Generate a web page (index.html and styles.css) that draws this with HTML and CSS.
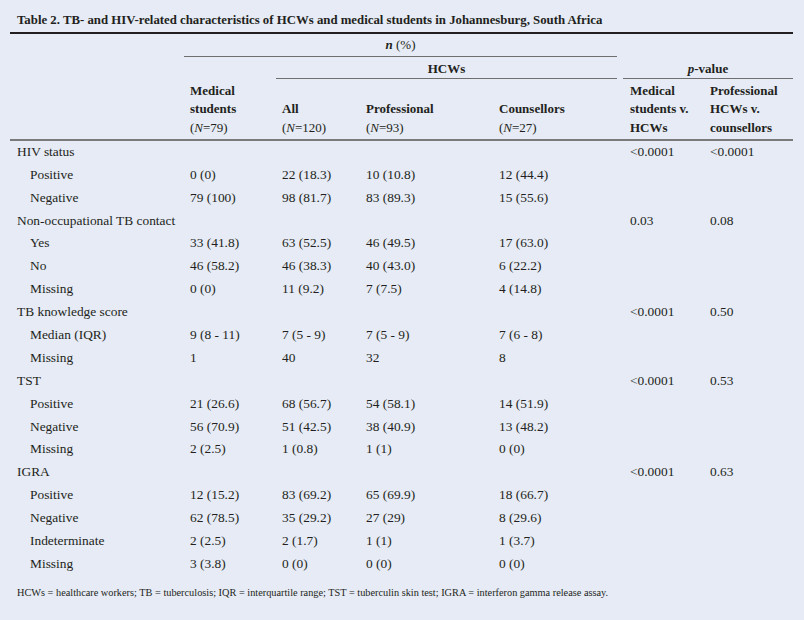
FILE: index.html
```html
<!DOCTYPE html>
<html>
<head>
<meta charset="utf-8">
<link rel="stylesheet" href="styles.css">
</head>
<body>
<div class="page">
  <h1 class="title">Table 2. TB- and HIV-related characteristics of HCWs and medical students in Johannesburg, South Africa</h1>
  <div class="grid">
    <div class="h1 span-n"><b><i>n</i></b> <span class="reg">(%)</span></div>

    <div class="h2 span-hcw">HCWs</div>
    <div class="h2 span-p"><i>p</i>-value</div>

    <div class="h3"></div>
    <div class="h3"><b>Medical<br>students</b><br>(<i>N</i>=79)</div>
    <div class="h3"><br><b>All</b><br>(<i>N</i>=120)</div>
    <div class="h3"><br><b>Professional</b><br>(<i>N</i>=93)</div>
    <div class="h3"><br><b>Counsellors</b><br>(<i>N</i>=27)</div>
    <div class="h3"><b>Medical<br>students v.<br>HCWs</b></div>
    <div class="h3"><b>Professional<br>HCWs v.<br>counsellors</b></div>

    <div class="c lab">HIV status</div><div class="c"></div><div class="c"></div><div class="c"></div><div class="c"></div><div class="c">&lt;0.0001</div><div class="c">&lt;0.0001</div>
    <div class="c sub">Positive</div><div class="c">0 (0)</div><div class="c">22 (18.3)</div><div class="c">10 (10.8)</div><div class="c">12 (44.4)</div><div class="c"></div><div class="c"></div>
    <div class="c sub">Negative</div><div class="c">79 (100)</div><div class="c">98 (81.7)</div><div class="c">83 (89.3)</div><div class="c">15 (55.6)</div><div class="c"></div><div class="c"></div>

    <div class="c lab">Non-occupational TB contact</div><div class="c"></div><div class="c"></div><div class="c"></div><div class="c"></div><div class="c">0.03</div><div class="c">0.08</div>
    <div class="c sub">Yes</div><div class="c">33 (41.8)</div><div class="c">63 (52.5)</div><div class="c">46 (49.5)</div><div class="c">17 (63.0)</div><div class="c"></div><div class="c"></div>
    <div class="c sub">No</div><div class="c">46 (58.2)</div><div class="c">46 (38.3)</div><div class="c">40 (43.0)</div><div class="c">6 (22.2)</div><div class="c"></div><div class="c"></div>
    <div class="c sub">Missing</div><div class="c">0 (0)</div><div class="c">11 (9.2)</div><div class="c">7 (7.5)</div><div class="c">4 (14.8)</div><div class="c"></div><div class="c"></div>

    <div class="c lab">TB knowledge score</div><div class="c"></div><div class="c"></div><div class="c"></div><div class="c"></div><div class="c">&lt;0.0001</div><div class="c">0.50</div>
    <div class="c sub">Median (IQR)</div><div class="c">9 (8 - 11)</div><div class="c">7 (5 - 9)</div><div class="c">7 (5 - 9)</div><div class="c">7 (6 - 8)</div><div class="c"></div><div class="c"></div>
    <div class="c sub">Missing</div><div class="c">1</div><div class="c">40</div><div class="c">32</div><div class="c">8</div><div class="c"></div><div class="c"></div>

    <div class="c lab">TST</div><div class="c"></div><div class="c"></div><div class="c"></div><div class="c"></div><div class="c">&lt;0.0001</div><div class="c">0.53</div>
    <div class="c sub">Positive</div><div class="c">21 (26.6)</div><div class="c">68 (56.7)</div><div class="c">54 (58.1)</div><div class="c">14 (51.9)</div><div class="c"></div><div class="c"></div>
    <div class="c sub">Negative</div><div class="c">56 (70.9)</div><div class="c">51 (42.5)</div><div class="c">38 (40.9)</div><div class="c">13 (48.2)</div><div class="c"></div><div class="c"></div>
    <div class="c sub">Missing</div><div class="c">2 (2.5)</div><div class="c">1 (0.8)</div><div class="c">1 (1)</div><div class="c">0 (0)</div><div class="c"></div><div class="c"></div>

    <div class="c lab">IGRA</div><div class="c"></div><div class="c"></div><div class="c"></div><div class="c"></div><div class="c">&lt;0.0001</div><div class="c">0.63</div>
    <div class="c sub">Positive</div><div class="c">12 (15.2)</div><div class="c">83 (69.2)</div><div class="c">65 (69.9)</div><div class="c">18 (66.7)</div><div class="c"></div><div class="c"></div>
    <div class="c sub">Negative</div><div class="c">62 (78.5)</div><div class="c">35 (29.2)</div><div class="c">27 (29)</div><div class="c">8 (29.6)</div><div class="c"></div><div class="c"></div>
    <div class="c sub">Indeterminate</div><div class="c">2 (2.5)</div><div class="c">2 (1.7)</div><div class="c">1 (1)</div><div class="c">1 (3.7)</div><div class="c"></div><div class="c"></div>
    <div class="c sub">Missing</div><div class="c">3 (3.8)</div><div class="c">0 (0)</div><div class="c">0 (0)</div><div class="c">0 (0)</div><div class="c"></div><div class="c"></div>
  </div>
  <p class="foot">HCWs = healthcare workers; TB = tuberculosis; IQR = interquartile range; TST = tuberculin skin test; IGRA = interferon gamma release assay.</p>
</div>
</body>
</html>
```

FILE: styles.css
```css
html, body {
  margin: 0;
  padding: 0;
  background: #e6ebf5;
}
.page {
  width: 783px;
  margin-left: 10px;
  color: #231f20;
  font-family: "Liberation Serif", "Times New Roman", serif;
  font-size: 13px;
}
.title {
  margin: 0;
  padding: 11px 0 3px 7px;
  font-size: 12.8px;
  font-weight: bold;
  line-height: 18px;
  border-bottom: 2px solid #231f20;
}
.grid {
  display: grid;
  grid-template-columns: 174px 92px 84px 133px 131px 80px 89px;
}
.h1, .h2 {
  font-weight: bold;
  line-height: 18px;
  text-align: center;
  border-bottom: 1px solid #6f6f6f;
}
.reg {
  font-weight: normal;
}
.h1 {
  padding: 2px 0 2px;
}
.span-n {
  grid-column: 2 / 6;
  margin-right: 7px;
}
.h2 {
  padding: 3px 0 0;
}
.span-hcw {
  grid-column: 3 / 6;
  margin-right: 7px;
}
.span-p {
  grid-column: 6 / 8;
  margin-left: -1px;
}
.h3 {
  padding: 3px 0 2px 6px;
  line-height: 18.3px;
  border-bottom: 2px solid #7a7a7a;
}
.c {
  height: 22.9px;
  line-height: 22.9px;
  padding-left: 6px;
  font-size: 13.4px;
  white-space: nowrap;
}
.lab {
  padding-left: 7px;
}
.sub {
  padding-left: 20px;
}
.foot {
  margin: 10px 0 0 7px;
  font-size: 10.3px;
  line-height: 13px;
}
```
